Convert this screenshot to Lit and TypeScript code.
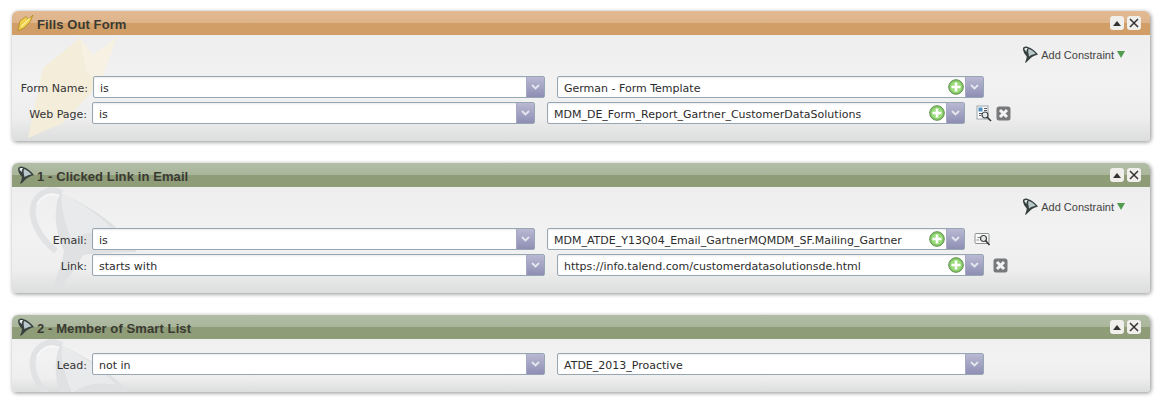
import { LitElement, html, css, svg } from "lit";
import { customElement } from "lit/decorators.js";

interface Row {
  label: string;
  labelWidth: number;
  op: string;
  opWidth: number;
  value: string;
  valueWidth: number;
  plus?: boolean;
  search?: "doc" | "plain";
  searchGap?: number;
  remove?: boolean;
  removeGap?: number;
}

interface Panel {
  title: string;
  tone: "orange" | "green";
  addConstraint?: boolean;
  rows: Row[];
}

const panels: Panel[] = [
  {
    title: "Fills Out Form",
    tone: "orange",
    addConstraint: true,
    rows: [
      { label: "Form Name:", labelWidth: 81, op: "is", opWidth: 452, value: "German - Form Template", valueWidth: 427, plus: true },
      {
        label: "Web Page:", labelWidth: 80, op: "is", opWidth: 443, value: "MDM_DE_Form_Report_Gartner_CustomerDataSolutions", valueWidth: 418,
        plus: true, search: "doc", searchGap: 11, remove: true, removeGap: 4,
      },
    ],
  },
  {
    title: "1 - Clicked Link in Email",
    tone: "green",
    addConstraint: true,
    rows: [
      {
        label: "Email:", labelWidth: 80, op: "is", opWidth: 443, value: "MDM_ATDE_Y13Q04_Email_GartnerMQMDM_SF.Mailing_Gartner", valueWidth: 418,
        plus: true, search: "plain", searchGap: 9,
      },
      { label: "Link:", labelWidth: 80, op: "starts with", opWidth: 453, value: "https://info.talend.com/customerdatasolutionsde.html", valueWidth: 427, plus: true, remove: true, removeGap: 9 },
    ],
  },
  {
    title: "2 - Member of Smart List",
    tone: "green",
    rows: [{ label: "Lead:", labelWidth: 80, op: "not in", opWidth: 453, value: "ATDE_2013_Proactive", valueWidth: 427 }],
  },
];

// rounded funnel, mouth top-left, spout swept to the right, tail lower-left
const funnel = (size: number) => html`<svg width=${size} height=${size} viewBox="0 0 18 18">
  <path d="M1 3 C1 1 4 0 6 1 C10 2 14 5 17 9 C14 10 11 11 9 13 L5 17 L3 18 C4 15 5 13 5 11 C3 9 1 6 1 3Z" fill="#37423f" />
  <path d="M2.500 3 C3 2 5 1.800 6 2.500 C5 3.500 4.500 4.500 5 6 C4 5.500 2.800 4.500 2.500 3Z" fill="#eef3f4" />
  <path d="M7 3 C10 4 12.500 6 14.500 8.500 C11.500 8.800 9.500 9.800 7.500 11 C7 8.500 6 5.500 7 3Z" fill="#b9c9cc" />
</svg>`;

const pencil = html`<svg width="18" height="18" viewBox="0 0 18 18">
  <path d="M1 17 L3 7 L9 2.500 L11 5.500 L16 1 L13 8 L7 14 Z" fill="#f2cf4a" stroke="#a98a2a" stroke-width="0.8" />
  <path d="M4 13 L9 8 L12.500 4.500" fill="none" stroke="#fbeea0" stroke-width="1.300" />
</svg>`;

const plusIcon = html`<svg class="plus" width="16" height="16" viewBox="0 0 16 16">
  <circle cx="8" cy="8" r="7.300" fill="#86c866" stroke="#5f8f52" />
  <circle cx="8" cy="8" r="5.600" fill="#9bdc7c" />
  <path d="M8 3.500V12.500M3.500 8H12.500" stroke="#fff" stroke-width="2.600" />
</svg>`;

const docSearch = html`<svg width="16" height="17" viewBox="0 0 16 17">
  <rect x="1" y="1" width="11" height="13" fill="#fff" stroke="#9aa3a8" />
  <rect x="2.500" y="2.500" width="4" height="4" fill="#4f8fc0" />
  <path d="M8 3.500H11M8 5.500H11M3 8.500H6M3 10.500H5" stroke="#556" />
  <circle cx="9" cy="10" r="3" fill="#dfe9ee" stroke="#444" stroke-width="1.200" />
  <path d="M11 12 L15 16" stroke="#333" stroke-width="1.600" />
</svg>`;

const plainSearch = html`<svg width="17" height="15" viewBox="0 0 17 15">
  <rect x="1" y="1.500" width="14" height="10" rx="1" fill="#fafafa" stroke="#8d9092" />
  <path d="M2.500 8H5M3.500 5.500H6" stroke="#888" />
  <circle cx="9.500" cy="6.500" r="3" fill="#e6e9ea" stroke="#444" stroke-width="1.200" />
  <path d="M11.500 8.500 L15.500 13" stroke="#333" stroke-width="1.600" />
</svg>`;

const removeIcon = html`<svg width="15" height="15" viewBox="0 0 15 15">
  <rect x="0.500" y="0.500" width="14" height="14" rx="2.500" fill="#77797b" />
  <path d="M4 4 L11 11M11 4 L4 11" stroke="#f4f4f4" stroke-width="3" />
</svg>`;

const arrowMark = svg`<path d="M16 127 L31 57 L68 27 L81 44 L105 26 L88 72 L51 112 Z" fill="#f3edda" />
  <path d="M68 27 L81 44 L105 26 L88 72 L74 60 Z" fill="#f6f1e2" />`;

const funnelMark = svg`<path d="M48 30 C80 44 108 62 125 89 C105 90 85 90 71 92 C64 104 58 118 38 130 C46 112 50 100 52 88 C44 70 40 50 48 30Z" fill="#dfe1e2" />
  <path d="M50 31 C70 40 90 54 104 70 C86 66 70 70 60 78 C54 62 48 46 50 31Z" fill="#e9eaeb" />
  <path d="M50 30 C40 24 28 28 22 40 C17 54 26 74 44 88" fill="none" stroke="#e0e2e3" stroke-width="6" />
  <path d="M47 33 C38 29 29 33 25 42" fill="none" stroke="#f7f7f7" stroke-width="2" />`;

@customElement("app-root")
export class AppRoot extends LitElement {
  static styles = css`
    :host {
      display: block;
      width: 1164px;
      height: 412px;
      background: #fff;
      overflow: hidden;
      font-family: "DejaVu Sans", sans-serif;
      color: #333;
    }
    .page {
      display: flex;
      flex-direction: column;
      gap: 22px;
      padding: 11px 14px 0 12px;
    }
    .panel {
      position: relative;
      overflow: hidden;
      border-radius: 6px 6px 4px 4px;
      background: linear-gradient(#ececec 0, #f2f2f2 55%, #eeeeee 82%, #dcdddd 100%);
      box-shadow: 1px 1px 4px rgba(0, 0, 0, 0.45);
      display: flex;
      flex-direction: column;
      box-sizing: border-box;
      height: 130px;
    }
    .panel.short {
      height: 77px;
    }
    .watermark {
      position: absolute;
      left: 0;
      top: 0;
    }
    .header {
      position: relative;
      height: 24px;
      display: flex;
      align-items: center;
      gap: 2px;
      padding: 0 9px 0 5px;
    }
    .header.orange {
      background: linear-gradient(#e2bb93 0, #deb38a 50%, #d19e67 50%, #d19e67 100%);
    }
    .header.green {
      background: linear-gradient(#b1bda4 0, #a9b69c 50%, #8e9c78 50%, #8e9c78 100%);
    }
    .title {
      flex: 1;
      padding-top: 2px;
      font: bold 13px "Liberation Sans", sans-serif;
      letter-spacing: 0.1px;
      color: #3a3a32;
      white-space: nowrap;
    }
    .winbtn {
      width: 14px;
      height: 14px;
      margin-left: 1px;
      background: #f1efeb;
      border-radius: 3px;
      display: flex;
      align-items: center;
      justify-content: center;
    }
    .body {
      position: relative;
      flex: 1;
      display: flex;
      flex-direction: column;
      padding-bottom: 17px;
      justify-content: flex-end;
      gap: 4px;
    }
    .add {
      position: absolute;
      top: 11px;
      right: 25px;
      display: flex;
      align-items: center;
      gap: 2px;
      font: 11px "Liberation Sans", sans-serif;
      color: #444;
    }
    .tri {
      width: 0;
      height: 0;
      margin-left: 1px;
      border-left: 4px solid transparent;
      border-right: 4px solid transparent;
      border-top: 7px solid #4f9c50;
    }
    .row {
      display: flex;
      align-items: center;
      height: 22px;
    }
    label {
      box-sizing: border-box;
      padding: 2px 5px 0 0;
      text-align: right;
      font-size: 11px;
      white-space: nowrap;
      color: #333;
    }
    .select {
      box-sizing: border-box;
      height: 22px;
      display: flex;
      align-items: center;
      background: #fff;
      border: 1px solid #97a6b3;
      border-radius: 2px;
      box-shadow: inset 0 1px 2px rgba(0, 0, 0, 0.08);
      font-size: 11px;
      color: #2c2c2c;
      white-space: nowrap;
    }
    .select .text {
      flex: 1;
      padding: 2px 0 0 6px;
      overflow: hidden;
    }
    .select.value {
      margin-left: 12px;
    }
    .plus {
      margin-right: 1px;
    }
    .drop {
      width: 17px;
      height: 20px;
      flex: none;
      display: flex;
      align-items: center;
      justify-content: center;
      background: linear-gradient(#b9b9d3, #8e8eb4);
      border-left: 1px solid #a8a8c4;
    }
    .tool {
      display: flex;
    }
  `;

  private renderRow(r: Row) {
    const chev = html`<svg width="9" height="6" viewBox="0 0 9 6">
      <path d="M1 1 L4.500 4.500 L8 1" fill="none" stroke="#e6e6ef" stroke-width="1.800" />
    </svg>`;
    return html`<div class="row">
      <label style="width:${r.labelWidth}px">${r.label}</label>
      <div class="select" style="width:${r.opWidth}px">
        <span class="text">${r.op}</span>
        <span class="drop">${chev}</span>
      </div>
      <div class="select value" style="width:${r.valueWidth}px">
        <span class="text">${r.value}</span>
        ${r.plus ? plusIcon : ""}
        <span class="drop">${chev}</span>
      </div>
      ${r.search
        ? html`<span class="tool" style="margin-left:${r.searchGap}px">${r.search === "doc" ? docSearch : plainSearch}</span>`
        : ""}
      ${r.remove ? html`<span class="tool" style="margin-left:${r.removeGap}px">${removeIcon}</span>` : ""}
    </div>`;
  }

  private renderPanel(p: Panel) {
    return html`<section class="panel ${p.addConstraint ? "" : "short"}">
      <svg class="watermark" width="200" height="130" viewBox="0 0 200 130">
        ${p.tone === "orange" ? arrowMark : funnelMark}
      </svg>
      <div class="header ${p.tone}">
        ${p.tone === "orange" ? pencil : funnel(18)}
        <span class="title">${p.title}</span>
        <span class="winbtn">
          <svg width="8" height="5" viewBox="0 0 8 5"><path d="M0 5 L4 0 L8 5Z" fill="#333" /></svg>
        </span>
        <span class="winbtn">
          <svg width="10" height="10" viewBox="0 0 10 10"><path d="M1 1 L9 9M9 1 L1 9" stroke="#333" stroke-width="1.500" /></svg>
        </span>
      </div>
      <div class="body">
        ${p.addConstraint ? html`<div class="add">${funnel(17)}<span>Add Constraint</span><span class="tri"></span></div>` : ""}
        ${p.rows.map((r) => this.renderRow(r))}
      </div>
    </section>`;
  }

  render() {
    return html`<div class="page">${panels.map((p) => this.renderPanel(p))}</div>`;
  }
}
